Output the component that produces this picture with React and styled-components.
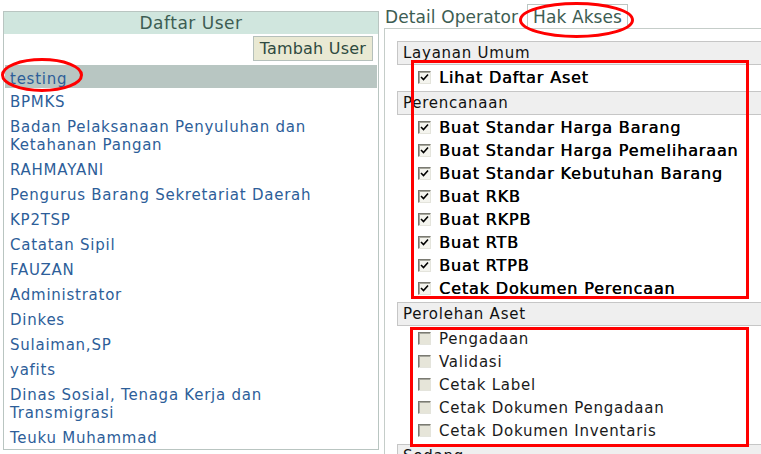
import styled, { createGlobalStyle } from "styled-components";

const Global = createGlobalStyle`
  html, body {
    margin: 0;
    padding: 0;
    background: #ffffff;
    font-family: "DejaVu Sans", Verdana, sans-serif;
  }
`;

const Page = styled.div`
  position: relative;
  width: 761px;
  height: 454px;
  overflow: hidden;
  display: flex;
  align-items: flex-start;
`;

/* left column */
const UserPanel = styled.div`
  margin: 11px 0 0 3px;
  width: 374px;
  border: 1px solid #b9c5c1;
  flex-shrink: 0;
`;

const PanelTitle = styled.div`
  background: #d0e6de;
  color: #3d5d53;
  font-size: 17px;
  letter-spacing: 0.5px;
  line-height: 22px;
  text-align: center;
`;

const Toolbar = styled.div`
  display: flex;
  justify-content: flex-end;
  padding: 2px 5px 0 0;
`;

const AddButton = styled.button`
  height: 25px;
  padding: 0 6px;
  background: #e9e9d3;
  border: 1px solid #b5c0bb;
  color: #2e4a40;
  font-family: inherit;
  font-size: 16px;
  letter-spacing: 0.2px;
  line-height: 23px;
`;

const UserList = styled.ul`
  list-style: none;
  margin: 4px 0 0;
  padding: 0 1px;
`;

const UserItem = styled.li`
  padding: 5px 8px ${(p) => (p.$active ? "0" : "2px")} 5px;
  background: ${(p) => (p.$active ? "#b8c6c2" : "transparent")};
  color: #2d5e99;
  font-size: 15px;
  letter-spacing: 0.75px;
  line-height: 18px;
  max-width: ${(p) => (p.$active ? "none" : "330px")};
`;

/* right column */
const DetailPanel = styled.div`
  margin-left: 5px;
  flex: 1;
  margin-right: -20px;
`;

const TabRow = styled.div`
  display: flex;
  align-items: flex-end;
  height: 28px;
`;

const Tab = styled.div`
  color: #3d5d53;
  font-size: 17px;
  letter-spacing: 0.1px;
  line-height: 21px;
  padding: ${(p) => (p.$current ? "2px 5px 0" : "0 8px 0 0")};
  border: 1px solid ${(p) => (p.$current ? "#bcc6c2" : "transparent")};
  border-bottom: none;
`;

const ContentBox = styled.div`
  border: 1px solid #c5cdc9;
  padding: 12px 0 0 12px;
  height: 440px;
`;

const SectionHead = styled.div`
  background: #efefef;
  border: 1px solid #c6c6c6;
  color: #111;
  font-size: 15px;
  letter-spacing: 0.75px;
  line-height: 22px;
  padding: 0 5px;
`;

const Items = styled.div`
  padding: 1px 0 2px 21px;
`;

const Item = styled.label`
  display: flex;
  align-items: center;
  height: 23px;
  font-size: ${(p) => (p.$on ? "16px" : "15px")};
  letter-spacing: ${(p) => (p.$on ? "0.85px" : "0.75px")};
  color: ${(p) => (p.$on ? "#000" : "#1a1a1a")};
  text-shadow: ${(p) => (p.$on ? "0.45px 0 0 #000" : "none")};
`;

const Box = styled.span`
  width: 11px;
  height: 11px;
  margin-right: 8px;
  flex-shrink: 0;
  border: 1px solid;
  border-color: #7a7a72 #e4e4dc #e4e4dc #7a7a72;
  box-shadow: inset 1px 1px 0 #a6a69c;
  background: ${(p) => (p.$on ? "#f4f4ee" : "#e6e5d9")};
  display: flex;
  align-items: center;
  justify-content: center;
`;

/* annotations drawn on top of the screenshot */
const Mark = styled.div`
  position: absolute;
  border: 3px solid #ff0000;
  pointer-events: none;
`;

const Ellipse = styled.svg`
  position: absolute;
  pointer-events: none;
  overflow: visible;
`;

const users = [
  "BPMKS",
  "Badan Pelaksanaan Penyuluhan dan Ketahanan Pangan",
  "RAHMAYANI",
  "Pengurus Barang Sekretariat Daerah",
  "KP2TSP",
  "Catatan Sipil",
  "FAUZAN",
  "Administrator",
  "Dinkes",
  "Sulaiman,SP",
  "yafits",
  "Dinas Sosial, Tenaga Kerja dan Transmigrasi",
  "Teuku Muhammad",
];

const sections = [
  { title: "Layanan Umum", on: true, items: ["Lihat Daftar Aset"] },
  {
    title: "Perencanaan",
    on: true,
    items: [
      "Buat Standar Harga Barang",
      "Buat Standar Harga Pemeliharaan",
      "Buat Standar Kebutuhan Barang",
      "Buat RKB",
      "Buat RKPB",
      "Buat RTB",
      "Buat RTPB",
      "Cetak Dokumen Perencaan",
    ],
  },
  {
    title: "Perolehan Aset",
    on: false,
    items: [
      "Pengadaan",
      "Validasi",
      "Cetak Label",
      "Cetak Dokumen Pengadaan",
      "Cetak Dokumen Inventaris",
    ],
  },
  { title: "Sedang", on: false, items: [] },
];

const Check = ({ on }) => (
  <Box $on={on}>
    {on && (
      <svg width="9" height="9" viewBox="0 0 9 9">
        <path d="M1 4 L3.5 6.5 L8 1.5" fill="none" stroke="#000" strokeWidth="1.6" />
      </svg>
    )}
  </Box>
);

export default function App() {
  return (
    <Page>
      <Global />
      <UserPanel>
        <PanelTitle>Daftar User</PanelTitle>
        <Toolbar>
          <AddButton>Tambah User</AddButton>
        </Toolbar>
        <UserList>
          <UserItem $active>testing</UserItem>
          {users.map((u) => (
            <UserItem key={u}>{u}</UserItem>
          ))}
        </UserList>
      </UserPanel>

      <DetailPanel>
        <TabRow>
          <Tab>Detail Operator</Tab>
          <Tab $current>Hak Akses</Tab>
        </TabRow>
        <ContentBox>
          {sections.map((s) => (
            <div key={s.title}>
              <SectionHead>{s.title}</SectionHead>
              <Items>
                {s.items.map((it) => (
                  <Item key={it} $on={s.on}>
                    <Check on={s.on} />
                    {it}
                  </Item>
                ))}
              </Items>
            </div>
          ))}
        </ContentBox>
      </DetailPanel>

      <Mark style={{ left: 411, top: 60, width: 332, height: 233 }} />
      <Mark style={{ left: 410, top: 327, width: 333, height: 114 }} />
      <Ellipse style={{ left: 1, top: 58 }} width="82" height="34">
        <ellipse cx="41" cy="17" rx="39.5" ry="15.5" fill="none" stroke="#ff0000" strokeWidth="3" />
      </Ellipse>
      <Ellipse style={{ left: 519, top: 2 }} width="115" height="36">
        <ellipse cx="57.5" cy="18" rx="56" ry="16.5" fill="none" stroke="#ff0000" strokeWidth="3" />
      </Ellipse>
    </Page>
  );
}
